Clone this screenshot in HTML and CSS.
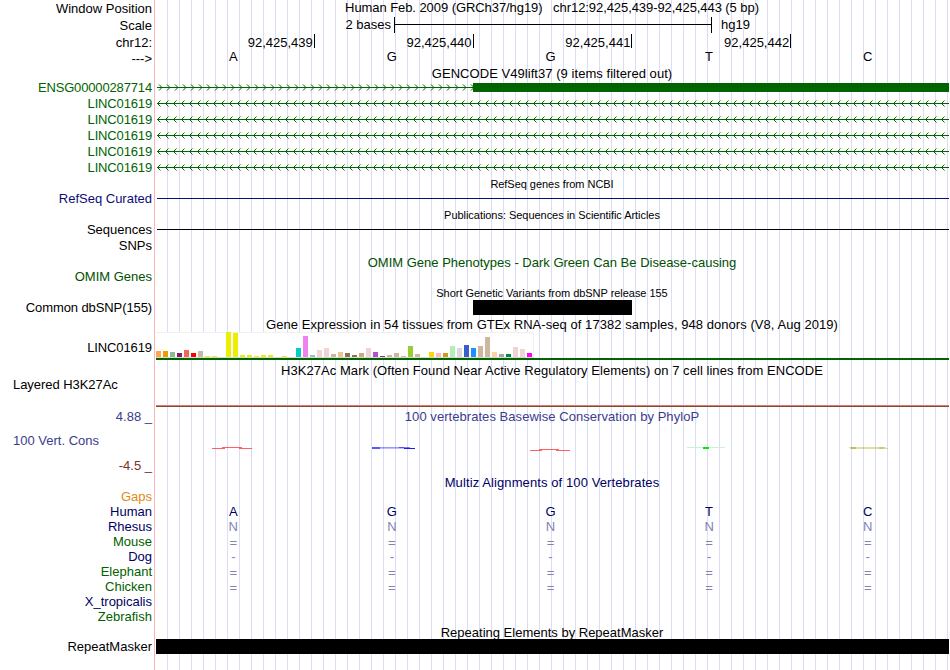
FILE: index.html
```html
<!DOCTYPE html>
<html>
<head>
  <meta charset="utf-8">
  <title>chr12:92,425,439-92,425,443</title>
  <link rel="stylesheet" href="styles.css">
</head>
<body>
  <svg class="defs" width="0" height="0">
    <defs>
      <pattern id="fwd" x="3" y="0" width="8" height="16" patternUnits="userSpaceOnUse">
        <path d="M1 5.5 L4 8.5 L1 11.5" class="chevron" />
      </pattern>
      <pattern id="rev" x="2" y="0" width="8" height="16" patternUnits="userSpaceOnUse">
        <path d="M3.5 5.5 L0.5 8.5 L3.5 11.5" class="chevron" />
      </pattern>
    </defs>
  </svg>

  <div class="browser">
    <div class="row position">
      <div class="label">Window Position</div>
      <div class="track title"><span>Human Feb. 2009 (GRCh37/hg19) &nbsp; chr12:92,425,439-92,425,443 (5 bp)</span></div>
    </div>
    <div class="row scale">
      <div class="label">Scale</div>
      <div class="track">
        <span class="scale-text">2 bases</span>
        <span class="scale-bar"></span>
        <span class="scale-name">hg19</span>
      </div>
    </div>
    <div class="row ruler">
      <div class="label">chr12:</div>
      <div class="track">
        <span>92,425,439</span><span>92,425,440</span><span>92,425,441</span><span>92,425,442</span>
      </div>
    </div>
    <div class="row sequence">
      <div class="label">---&gt;</div>
      <div class="track bases"><span>A</span><span>G</span><span>G</span><span>T</span><span>C</span></div>
    </div>

    <!-- Genes -->
    <div class="title-row t14 wide"><span>GENCODE V49lift37 (9 items filtered out)</span></div>
    <div class="row gene">
      <div class="label">ENSG00000287714</div>
      <div class="track">
        <svg width="794" height="16"><rect x="2" width="316" height="16" fill="url(#fwd)" /><rect x="2" y="8" width="316" height="1" /><rect x="318" y="4" width="476" height="9" /></svg>
      </div>
    </div>
    <div class="row gene">
      <div class="label">LINC01619</div>
      <div class="track"><svg width="794" height="16"><rect x="2" width="792" height="16" fill="url(#rev)" /><rect x="2" y="8" width="792" height="1" /></svg></div>
    </div>
    <div class="row gene">
      <div class="label">LINC01619</div>
      <div class="track"><svg width="794" height="16"><rect x="2" width="792" height="16" fill="url(#rev)" /><rect x="2" y="8" width="792" height="1" /></svg></div>
    </div>
    <div class="row gene">
      <div class="label">LINC01619</div>
      <div class="track"><svg width="794" height="16"><rect x="2" width="792" height="16" fill="url(#rev)" /><rect x="2" y="8" width="792" height="1" /></svg></div>
    </div>
    <div class="row gene">
      <div class="label">LINC01619</div>
      <div class="track"><svg width="794" height="16"><rect x="2" width="792" height="16" fill="url(#rev)" /><rect x="2" y="8" width="792" height="1" /></svg></div>
    </div>
    <div class="row gene">
      <div class="label">LINC01619</div>
      <div class="track"><svg width="794" height="16"><rect x="2" width="792" height="16" fill="url(#rev)" /><rect x="2" y="8" width="792" height="1" /></svg></div>
    </div>

    <div class="title-row small t15"><span>RefSeq genes from NCBI</span></div>
    <div class="row line refseq">
      <div class="label">RefSeq Curated</div>
      <div class="track"></div>
    </div>
    <div class="title-row small t15"><span>Publications: Sequences in Scientific Articles</span></div>
    <div class="row line pubs">
      <div class="label">Sequences</div>
      <div class="track"></div>
    </div>
    <div class="row snps"><div class="label">SNPs</div></div>

    <div class="title-row omim omim-title t16"><span>OMIM Gene Phenotypes - Dark Green Can Be Disease-causing</span></div>
    <div class="row omim omim-genes"><div class="label">OMIM Genes</div></div>

    <div class="title-row small t16"><span>Short Genetic Variants from dbSNP release 155</span></div>
    <div class="row dbsnp">
      <div class="label">Common dbSNP(155)</div>
      <div class="track"><div class="variant"></div></div>
    </div>

    <!-- Expression -->
    <div class="title-row gtex-title wide"><span>Gene Expression in 54 tissues from GTEx RNA-seq of 17382 samples, 948 donors (V8, Aug 2019)</span></div>
    <div class="row gtex">
      <div class="label">LINC01619</div>
      <div class="track"><div class="bars" id="bars"></div></div>
    </div>

    <!-- Regulation -->
    <div class="title-row h3k-title wide"><span>H3K27Ac Mark (Often Found Near Active Regulatory Elements) on 7 cell lines from ENCODE</span></div>
    <div class="row h3k">
      <div class="label left">Layered H3K27Ac</div>
      <div class="track"></div>
    </div>

    <!-- Conservation -->
    <div class="row phylop">
      <div class="label">
        <div class="max">4.88 _</div>
        <div class="name">100 Vert. Cons</div>
        <div class="min">-4.5 _</div>
      </div>
      <div class="track">
        <div class="phylop-title wide"><span>100 vertebrates Basewise Conservation by PhyloP</span></div>
        <svg width="794" height="50">
          <g fill="#ff2020">
            <rect x="57" y="24" width="13" height="1" opacity=".7" /><rect x="67" y="23" width="20" height="1" opacity=".7" /><rect x="84" y="24" width="13" height="1" opacity=".7" />
            <rect x="375" y="26" width="12" height="1" opacity=".7" /><rect x="384" y="25" width="20" height="1" opacity=".7" /><rect x="401" y="26" width="14" height="1" opacity=".7" />
          </g>
          <g fill="#0000ff">
            <rect x="217" y="23" width="8" height="2" opacity=".65" /><rect x="225" y="23" width="24" height="1" opacity=".4" /><rect x="225" y="24" width="24" height="1" opacity=".25" /><rect x="244" y="23" width="11" height="1" opacity=".5" /><rect x="249" y="24" width="11" height="1" opacity=".9" />
          </g>
          <rect x="532" y="23" width="38" height="1" fill="#c8f4d0" />
          <rect x="548" y="23" width="6" height="2" fill="#00ee00" />
          <g fill="#a8a000">
            <rect x="694" y="23" width="37" height="1" opacity=".35" /><rect x="695" y="24" width="38" height="1" opacity=".35" /><rect x="696" y="23" width="5" height="2" opacity=".5" /><rect x="724" y="23" width="5" height="2" opacity=".35" />
          </g>
        </svg>
      </div>
    </div>

    <div class="title-row navy multiz t16"><span>Multiz Alignments of 100 Vertebrates</span></div>
    <div class="row gaps"><div class="label">Gaps</div></div>
    <div class="row species navy">
      <div class="label">Human</div>
      <div class="track bases human"><span>A</span><span>G</span><span>G</span><span>T</span><span>C</span></div>
    </div>
    <div class="row species navy">
      <div class="label">Rhesus</div>
      <div class="track bases"><span>N</span><span>N</span><span>N</span><span>N</span><span>N</span></div>
    </div>
    <div class="row species green">
      <div class="label">Mouse</div>
      <div class="track bases gap"><span>=</span><span>=</span><span>=</span><span>=</span><span>=</span></div>
    </div>
    <div class="row species navy">
      <div class="label">Dog</div>
      <div class="track bases"><span>-</span><span>-</span><span>-</span><span>-</span><span>-</span></div>
    </div>
    <div class="row species green">
      <div class="label">Elephant</div>
      <div class="track bases gap"><span>=</span><span>=</span><span>=</span><span>=</span><span>=</span></div>
    </div>
    <div class="row species green">
      <div class="label">Chicken</div>
      <div class="track bases gap"><span>=</span><span>=</span><span>=</span><span>=</span><span>=</span></div>
    </div>
    <div class="row species navy"><div class="label">X_tropicalis</div></div>
    <div class="row species green"><div class="label">Zebrafish</div></div>

    <div class="title-row t15"><span>Repeating Elements by RepeatMasker</span></div>
    <div class="row repeat">
      <div class="label">RepeatMasker</div>
      <div class="track"></div>
    </div>
  </div>

  <script>
    // [color, height] for each tissue
    const tissues = [
      ["#ffa54f", 6], ["#ee9a00", 6], ["#8fbc8f", 5], ["#8b1c62", 4], ["#ee6a50", 7], ["#ff0000", 4],
      ["#cdb79e", 6], ["#eeee00", 1], ["#eeee00", 1], ["#eeee00", 0], ["#eeee00", 25], ["#eeee00", 24],
      ["#eeee00", 2], ["#eeee00", 2], ["#eeee00", 1], ["#eeee00", 2], ["#eeee00", 2], ["#eeee00", 0],
      ["#eeee00", 1], ["#eeee00", 0], ["#00cdcd", 9], ["#ee82ee", 21], ["#9ac0cd", 2], ["#eed5d2", 7],
      ["#eed5d2", 9], ["#cdb79e", 3], ["#eec591", 5], ["#8b7355", 4], ["#8b7355", 2], ["#cdaa7d", 4],
      ["#eed5d2", 9], ["#b452cd", 5], ["#7a378b", 1], ["#cdb79e", 2], ["#cdb79e", 4], ["#cdb79e", 1],
      ["#9acd32", 11], ["#cdb79e", 3], ["#7a67ee", 0], ["#ffd700", 5], ["#ffb6c1", 4], ["#cd9b1d", 4],
      ["#b4eeb4", 11], ["#d9d9d9", 9], ["#3a5fcd", 12], ["#1e90ff", 9], ["#cdb79e", 11], ["#cdb79e", 20],
      ["#ffd39b", 5], ["#a6a6a6", 3], ["#008b45", 3], ["#eed5d2", 10], ["#eed5d2", 8], ["#ff00ff", 4]
    ];
    const bars = document.getElementById("bars");
    tissues.forEach(function([color, height]) {
      const bar = document.createElement("span");
      bar.style.height = height + "px";
      bar.style.backgroundColor = color;
      bars.appendChild(bar);
    });
  </script>
</body>
</html>
```
FILE: styles.css
```css
body {
  margin: 0;
  background-color: #fff;
  font-family: "Liberation Sans", Arial, sans-serif;
  font-size: 13px;
  color: #000;
  overflow: hidden;
}
.defs {
  display: block;
}
.browser {
  width: 949px;
  height: 670px;
  white-space: nowrap;
  background:
    linear-gradient(#ffb4b4, #ffb4b4) 154px 0 / 1px 100% no-repeat,
    repeating-linear-gradient(to right, #dcdcf8 0, #dcdcf8 1px, transparent 1px, transparent 12px) 167px 0 / 782px 100% no-repeat;
}
.row {
  display: flex;
}
.label {
  width: 155px;
  box-sizing: border-box;
  padding-right: 3px;
  text-align: right;
  flex: none;
}
.track {
  width: 794px;
  flex: none;
}
.track svg {
  display: block;
}
.title,
.title-row {
  text-align: center;
}
.title-row {
  margin-left: 155px;
}
.small {
  font-size: 11px;
  letter-spacing: -0.04px;
}
.wide {
  letter-spacing: 0.05px;
}
.t14 { height: 14px; line-height: 17px; }
.t15 { height: 15px; line-height: 17px; }
.t16 { height: 16px; line-height: 18px; }
.small.t15 { line-height: 19px; }

/* position and ruler */
.position {
  height: 17px;
  line-height: 17px;
}
.position .title {
  line-height: 15px;
  letter-spacing: -0.07px;
}
.scale {
  height: 17px;
  line-height: 17px;
}
.scale .track {
  display: flex;
}
.scale-text {
  width: 236px;
  margin-right: 3px;
  text-align: right;
  line-height: 16px;
}
.scale-bar {
  width: 316px;
  height: 16px;
  border-left: 1px solid #000;
  border-right: 1px solid #000;
  background: linear-gradient(#000, #000) 0 7px / 100% 1px no-repeat;
}
.scale-name {
  margin-left: 9px;
  line-height: 16px;
}
.ruler {
  height: 16px;
  line-height: 17px;
}
.ruler .track {
  display: flex;
  padding-left: 1px;
  box-sizing: border-box;
}
.ruler .track span {
  width: 158.8px;
  height: 14px;
  box-sizing: border-box;
  padding-right: 1px;
  border-right: 1px solid #000;
  text-align: right;
}
.sequence {
  height: 15px;
  line-height: 17px;
}
.sequence .bases {
  line-height: 14px;
}
.bases {
  display: flex;
  width: 793px;
  margin-left: -1px;
}
.bases span {
  flex: 1;
  text-align: center;
}

/* gene tracks */
.gene {
  height: 16px;
  line-height: 17px;
  color: #006400;
}
.gene .label {
  letter-spacing: -0.15px;
}
.gtex .label {
  letter-spacing: -0.1px;
}
.gene svg {
  fill: #006400;
}
.chevron {
  fill: none;
  stroke: #006400;
  stroke-width: 1;
}
.line {
  height: 16px;
  line-height: 17px;
}
.line .track {
  background: linear-gradient(currentColor, currentColor) 2px 8px / 792px 1px no-repeat;
}
.refseq {
  color: #0c0c78;
}
.snps {
  height: 16px;
  line-height: 17px;
}
.omim {
  color: #005000;
}
.omim-title {
  line-height: 20px;
}
.omim-genes {
  height: 15px;
  line-height: 16px;
}
.dbsnp {
  height: 15px;
  line-height: 16px;
}
.dbsnp .label {
  letter-spacing: -0.1px;
}
.variant {
  width: 159px;
  height: 15px;
  margin-left: 318px;
  background-color: #000;
}

/* expression */
.gtex-title {
  height: 17px;
  line-height: 19px;
}
.gtex {
  height: 28px;
  line-height: 32px;
}
.gtex .track {
  box-sizing: border-box;
  padding-left: 1px;
  background: linear-gradient(#006400, #006400) 1px 26px / 793px 2px no-repeat;
}
.bars {
  display: flex;
  align-items: flex-end;
  gap: 2px;
  width: 378px;
  height: 26px;
  box-sizing: border-box;
  background-color: #fff;
  border-bottom: 1px solid #d8d8d8;
  box-shadow: inset 0 1px #f0f0f0, inset -1px 0 #f0f0f0;
}
.bars span {
  width: 5px;
  flex: none;
}

/* regulation */
.h3k-title {
  height: 18px;
  line-height: 22px;
}
.h3k {
  height: 30px;
  line-height: 13px;
}
.label.left {
  padding-left: 13px;
  text-align: left;
}
.h3k .label {
  letter-spacing: -0.05px;
}
.h3k .track {
  background:
    linear-gradient(#e87878, #e87878) 1px 27px / 793px 1px no-repeat,
    linear-gradient(#735428, #735428) 1px 28px / 793px 1px no-repeat;
}

/* conservation */
.phylop {
  height: 66px;
  color: #3c3c8c;
}
.phylop .label {
  display: flex;
  flex-direction: column;
  line-height: 17px;
}
.phylop .max {
  height: 24px;
}
.phylop .name {
  height: 26px;
  padding-left: 13px;
  text-align: left;
}
.phylop .min {
  color: #783030;
}
.phylop-title {
  height: 16px;
  line-height: 18px;
  text-align: center;
}
.multiz {
  letter-spacing: 0.1px;
}
.navy {
  color: #000064;
}
.green {
  color: #005f00;
}
.gaps {
  height: 14px;
  line-height: 13px;
  color: #e08a14;
}
.species {
  height: 15px;
  line-height: 16px;
}
.species .bases {
  color: #8282b4;
}
.species .bases.human {
  color: #000064;
}
.species .bases.gap {
  line-height: 18px;
}
.repeat {
  height: 15px;
  line-height: 16px;
}
.repeat .track {
  background: linear-gradient(#000, #000) 1px 0 / 793px 15px no-repeat;
}
```
